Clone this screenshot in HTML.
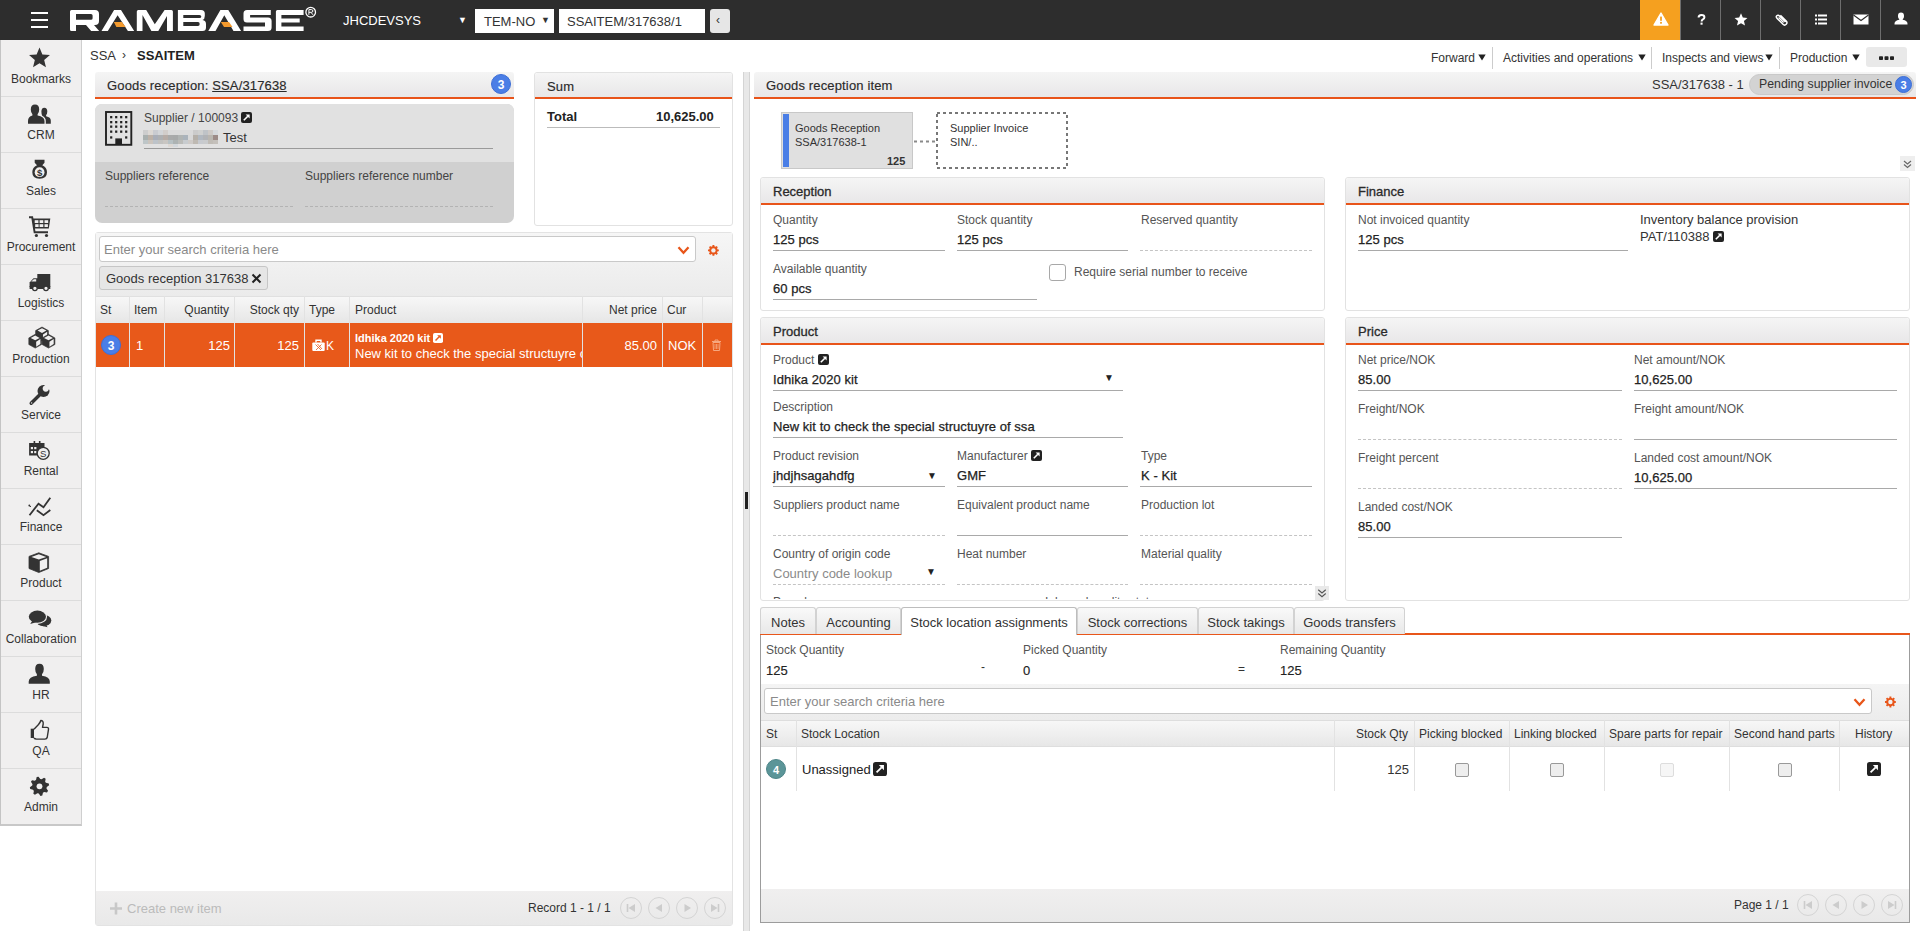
<!DOCTYPE html>
<html><head><meta charset="utf-8">
<style>
*{box-sizing:border-box;margin:0;padding:0}
html,body{width:1920px;height:937px;overflow:hidden;background:#fff;font-family:"Liberation Sans",sans-serif;color:#333;font-size:12px}
.a{position:absolute}
.t{position:absolute;white-space:nowrap;line-height:1}
#top{left:0;top:0;width:1920px;height:40px;background:#2d2d2d}
.tb{position:absolute;top:0;width:40px;height:40px;border-left:1px solid #6e6e6e}
#side{left:0;top:40px;width:82px;height:786px;background:#f0efef;border-left:1px solid #c4c4c4;border-right:1px solid #cfcfcf;border-bottom:2px solid #c8c8c8}
.si{position:absolute;left:0;width:80px;height:57px;border-bottom:1px solid #dcdcdc}
.si .lb{position:absolute;left:0;width:80px;text-align:center;top:33px;font-size:12px;color:#333;line-height:1}
.si svg{position:absolute;left:27px;top:6px}
.ph{position:absolute;height:27px;background:linear-gradient(#f5f5f5,#e8e7e8);border-bottom:2px solid #e8541a;border-radius:3px 3px 0 0}
.ph .tt{position:absolute;left:12px;top:7px;font-size:13px;color:#2a2a2a;white-space:nowrap;line-height:1;letter-spacing:0.15px;-webkit-text-stroke:0.15px #2a2a2a}
.pb{position:absolute;border:1px solid #e2e2e2;border-radius:3px;background:#fff}
.lbl{position:absolute;font-size:12px;color:#555;white-space:nowrap;line-height:1}
.val{position:absolute;font-size:13px;color:#222;white-space:nowrap;line-height:1;font-weight:normal;-webkit-text-stroke:0.25px #222;margin-top:-1px;letter-spacing:0.05px}
.ul{position:absolute;height:1px;background:#a9a9a9}
.dl{position:absolute;height:0;border-top:1px dashed #c4c4c4}
.ext{display:inline-block;width:11px;height:11px;background:#222;border-radius:2px;position:relative;vertical-align:middle}
.badge{position:absolute;width:20px;height:20px;border-radius:50%;background:#4a7ee6;color:#fff;font-size:12px;font-weight:bold;text-align:center;line-height:20px;border:1px solid #3d6fd6}
.vl{position:absolute;width:1px;background:#e2e2e2}
.gh{position:absolute;top:304px;font-size:12px;color:#333;white-space:nowrap;line-height:1}
.gr{position:absolute;top:339px;font-size:13px;color:#fff;white-space:nowrap;line-height:1}
.pg{position:absolute;width:22px;height:22px;border:1px solid #d4d4d4;border-radius:50%}
.pg svg{position:absolute;left:-1px;top:-1px}
.hb{font-weight:normal;font-size:13px !important;top:7px !important;letter-spacing:0 !important;-webkit-text-stroke:0.3px #2a2a2a !important}
.cb{position:absolute;width:14px;height:14px;border:1px solid #999;border-radius:2px;background:#eee}
.tab{position:absolute;top:607px;height:27px;background:linear-gradient(#f9f9f9,#e8e8e8);border:1px solid #d2d2d2;border-bottom:none;border-radius:3px 3px 0 0;font-size:13px;color:#333;line-height:29px;text-align:center;white-space:nowrap}
.tab.act{background:#fff;height:28px;border-color:#bdbdbd}
.gh2{position:absolute;top:728px;font-size:12px;color:#333;white-space:nowrap;line-height:1}
.exs{vertical-align:-1px}
.vr{-webkit-text-stroke:0.15px #222 !important}
</style></head><body>
<!-- TOP BAR -->
<div id="top" class="a">
  <div class="a" style="left:31px;top:12px;width:17px;height:2px;background:#fff"></div>
  <div class="a" style="left:31px;top:19px;width:17px;height:2px;background:#fff"></div>
  <div class="a" style="left:31px;top:26px;width:17px;height:2px;background:#fff"></div>
  <svg class="a" style="left:70px;top:4px" width="252" height="28" viewBox="0 -6 252 28">
    <g fill="#fff" fill-rule="evenodd">
      <path d="M0,1.5 Q0,0 1.5,0 H25 Q29,0 29,4 V11 Q29,15 25,15 H24 L29.2,21 H21.2 L16,15 H6 V21 H1.5 Q0,21 0,19.5 Z M6,4 H21 Q22.6,4 22.6,5.5 V8.3 Q22.6,9.8 21,9.8 H6 Z"/>
      <path d="M31.5,21 L44.1,0 H51 L64.2,21 H57.9 L47.6,5.2 L37.8,21 Z"/>
      <path d="M66.8,21 V1.5 Q66.8,0 68.3,0 H76.2 L84.8,14.3 L94.6,0 H101.4 Q102.9,0 102.9,1.5 V21 H97 V6 L88.3,21 H81.4 L72.5,5 V21 Z"/>
      <path d="M107.9,21 V0 H131 Q134.8,0 134.8,3.5 V6 Q134.8,9.3 132.5,10 Q136,10.7 136,14 V17.5 Q136,21 132.5,21 Z M113.3,4.9 H129.5 Q131.3,4.9 131.3,6.4 Q131.3,8 129.5,8 H113.3 Z M113.3,12 H128 Q129.7,12 129.7,13.9 Q129.7,15.9 128,15.9 H113.3 Z"/>
      <path d="M138.3,21 L150.4,0 H158.3 L171.1,21 H163.5 L154.3,5.3 L145.5,21 Z"/>
      <path d="M177,0 H200.8 V5 H180.1 V7.4 H198 Q201.6,7.4 201.6,11 V17.5 Q201.6,21 198,21 H173.5 V16.4 H195 V12.5 H177 Q173.5,12.5 173.5,9 V3.5 Q173.5,0 177,0 Z"/>
      <path d="M205.9,21 V1.5 Q205.9,0 207.4,0 H233.6 V5 H211.4 V8.6 H229.7 V12.5 H211.4 V16.4 H233.6 V21 Z"/>
    </g>
    <path d="M43.85,12 H51.9 L55.6,16.9 H46.4 Z M150.8,12 H159 L162.5,17 H154 Z" fill="#f39a2e"/>
    <circle cx="240.7" cy="2.2" r="4.8" fill="none" stroke="#fff" stroke-width="1.3"/>
    <path d="M238.9,4.8 V-0.4 H241.4 Q242.9,-0.4 242.9,1 Q242.9,2.3 241.4,2.3 H238.9 M241,2.3 L243,4.8" fill="none" stroke="#fff" stroke-width="1"/>
  </svg>
  <div class="t" style="left:343px;top:14px;font-size:13px;color:#fff">JHCDEVSYS</div>
  <div class="t" style="left:458px;top:16px;font-size:9px;color:#fff">&#9660;</div>
  <div class="a" style="left:475px;top:9px;width:79px;height:24px;background:#fff"></div>
  <div class="t" style="left:484px;top:15px;font-size:13px;color:#333">TEM-NO</div>
  <div class="t" style="left:541px;top:16px;font-size:9px;color:#333">&#9660;</div>
  <div class="a" style="left:559px;top:9px;width:146px;height:24px;background:#fff"></div>
  <div class="t" style="left:567px;top:15px;font-size:13px;color:#333">SSAITEM/317638/1</div>
  <div class="a" style="left:710px;top:9px;width:20px;height:24px;background:#e6e6e6;border-radius:3px"></div>
  <div class="t" style="left:716px;top:14px;font-size:12px;color:#333">&#8249;</div>
  <div class="tb" style="left:1640px;background:#f5a01f;border-left:none"></div>
  <div class="tb" style="left:1680px"></div>
  <div class="tb" style="left:1720px"></div>
  <div class="tb" style="left:1760px"></div>
  <div class="tb" style="left:1800px"></div>
  <div class="tb" style="left:1840px"></div>
  <div class="tb" style="left:1880px"></div>
  <svg class="a" style="left:1653px;top:12px" width="16" height="14" viewBox="0 0 16 14"><path d="M8,1 L15,13 H1 Z" fill="#fff" stroke="#fff" stroke-width="1.4" stroke-linejoin="round"/><rect x="7.1" y="4.6" width="1.8" height="4.2" fill="#f5a01f"/><rect x="7.1" y="9.9" width="1.8" height="1.8" fill="#f5a01f"/></svg>
  <svg class="a" style="left:1697px;top:14px" width="9" height="11" viewBox="0 0 9 11"><path d="M1.6,3.6 Q1.6,1 4.5,1 Q7.4,1 7.4,3.3 Q7.4,4.6 5.9,5.4 Q4.6,6.1 4.6,7.4" fill="none" stroke="#fff" stroke-width="2"/><rect x="3.5" y="8.6" width="2.1" height="2.1" fill="#fff"/></svg>
  <svg class="a" style="left:1734px;top:13px" width="14" height="13" viewBox="0 0 24 23"><path d="M12,0.5 L15.2,8.1 L23.4,8.8 L17.2,14.2 L19.1,22.3 L12,18 L4.9,22.3 L6.8,14.2 L0.6,8.8 L8.8,8.1 Z" fill="#fff"/></svg>
  <svg class="a" style="left:1775px;top:13px" width="13" height="13" viewBox="0 0 13 13"><path d="M10.5,9 L4.5,3 Q3,1.5 1.8,2.7 Q0.6,3.9 2.1,5.4 L8,11.3 Q9.6,12.9 11.2,11.3 Q12.8,9.7 11.2,8.1 L5.4,2.3" fill="none" stroke="#fff" stroke-width="1.5"/><path d="M3.6,4.5 L8.6,9.5" stroke="#fff" stroke-width="1.3"/></svg>
  <svg class="a" style="left:1815px;top:14px" width="12" height="11" viewBox="0 0 12 11"><g fill="#fff"><rect x="0" y="0.5" width="2" height="2"/><rect x="3" y="0.5" width="9" height="2"/><rect x="0" y="4.5" width="2" height="2"/><rect x="3" y="4.5" width="9" height="2"/><rect x="0" y="8.5" width="2" height="2"/><rect x="3" y="8.5" width="9" height="2"/></g></svg>
  <svg class="a" style="left:1853px;top:14px" width="16" height="11" viewBox="0 0 16 11"><rect x="0.5" y="0.5" width="15" height="10" fill="#fff"/><path d="M0.5,1 L8,6.5 L15.5,1" fill="none" stroke="#2d2d2d" stroke-width="1.1"/></svg>
  <svg class="a" style="left:1894px;top:12px" width="14" height="13" viewBox="0 0 16 15"><path d="M8,0.5 Q11.5,0.5 11.5,4.5 Q11.5,7 10,8.3 V9 Q15.5,10 15.5,13.5 V14.5 H0.5 V13.5 Q0.5,10 6,9 V8.3 Q4.5,7 4.5,4.5 Q4.5,0.5 8,0.5 Z" fill="#fff"/></svg>
</div>

<!-- SIDEBAR -->
<div id="side" class="a">
  <div class="si" style="top:0px"><svg width="40" height="32" viewBox="0 0 40 32" style="left:19px;top:0"><path d="M19.50,7.40 L22.38,14.44 L29.96,15.00 L24.16,19.91 L25.97,27.30 L19.50,23.30 L13.03,27.30 L14.84,19.91 L9.04,15.00 L16.62,14.44 Z" fill="#333"/></svg><div class="lb">Bookmarks</div></div>
  <div class="si" style="top:56px"><svg width="40" height="32" viewBox="0 0 40 32" style="left:19px;top:0"><path d="M15,8.4 Q19.2,8.4 19.2,13.5 Q19.2,16.5 17.6,18.2 V19.5 Q24.5,20.8 24.5,25 V27.8 H8 V25 Q8,20.8 12.4,19.5 V18.2 Q10.8,16.5 10.8,13.5 Q10.8,8.4 15,8.4 Z" fill="#333"/><path d="M24.3,11.7 Q27.3,11.7 27.3,15.5 Q27.3,17.8 26.1,19 V20.2 Q30.8,21.3 30.8,24.5 V27.8 H25.8 V25 Q25.8,21.5 22.2,19.8 Q21.4,18 21.4,15.5 Q21.4,11.7 24.3,11.7 Z" fill="#333"/></svg><div class="lb">CRM</div></div>
  <div class="si" style="top:112px"><svg width="40" height="32" viewBox="0 0 40 32" style="left:19px;top:0"><path d="M14.7,7.8 H24.5 V10.8 L22.3,13.2 Q27,15.2 27,20.3 Q27,26.8 19.6,26.8 Q12.3,26.8 12.3,20.3 Q12.3,15.2 17,13.2 L14.7,10.8 Z" fill="#333"/><circle cx="19.6" cy="20.2" r="4.9" fill="#f0efef"/><text x="19.6" y="23.6" font-family="Liberation Sans" font-size="9.5" font-weight="bold" text-anchor="middle" fill="#333">$</text></svg><div class="lb">Sales</div></div>
  <div class="si" style="top:168px"><svg width="40" height="32" viewBox="0 0 40 32" style="left:19px;top:0"><path d="M9,9.3 H12.2 L14.6,24.2 H28" fill="none" stroke="#333" stroke-width="1.9"/><path d="M12.4,10.6 H30.3 L28.8,20.5 H13.8 Z" fill="#333"/><rect x="14.7" y="12.2" width="3.7" height="2.8" fill="#f0efef"/><rect x="19.6" y="12.2" width="3.7" height="2.8" fill="#f0efef"/><rect x="24.5" y="12.2" width="3.7" height="2.8" fill="#f0efef"/><rect x="15.2" y="16.2" width="3.4" height="2.8" fill="#f0efef"/><rect x="19.6" y="16.2" width="3.7" height="2.8" fill="#f0efef"/><rect x="24.5" y="16.2" width="3.4" height="2.8" fill="#f0efef"/><circle cx="16.4" cy="27.5" r="1.6" fill="#333"/><circle cx="26.5" cy="27.5" r="1.6" fill="#333"/></svg><div class="lb">Procurement</div></div>
  <div class="si" style="top:224px"><svg width="40" height="32" viewBox="0 0 40 32" style="left:19px;top:0"><path d="M17.3,10 H30.3 V23 H17.3 Z" fill="#333"/><path d="M9.6,18.5 L13.5,14.2 H18 V23 H9.6 Z" fill="#333"/><path d="M11.2,17.6 L13.8,15.3 H16.2 V17.6 Z" fill="#f0efef"/><rect x="9.6" y="22" width="20.7" height="3" fill="#333"/><circle cx="14.9" cy="24.3" r="2.3" fill="#f0efef" stroke="#333" stroke-width="1.3"/><circle cx="26" cy="24.3" r="2.3" fill="#f0efef" stroke="#333" stroke-width="1.3"/></svg><div class="lb">Logistics</div></div>
  <div class="si" style="top:280px"><svg width="40" height="32" viewBox="0 0 40 32" style="left:19px;top:0"><path d="M22,7 L28.4,10.6 L28.4,17.2 L22,20.799999999999997 L15.6,17.2 L15.6,10.6 Z" fill="#333" stroke="#333" stroke-width="0.6" stroke-linejoin="round"/><path d="M22,8.2 L26.479999999999997,10.6 L22,13.0 L17.52,10.6 Z" fill="#f0efef"/><path d="M22.96,14.559999999999999 L27.2,11.68 L27.2,16.599999999999998 L22.96,19.479999999999997 Z" fill="#f0efef"/><path d="M15.2,14.3 L21.6,17.900000000000002 L21.6,24.5 L15.2,28.1 L8.799999999999999,24.5 L8.799999999999999,17.900000000000002 Z" fill="#333" stroke="#333" stroke-width="0.6" stroke-linejoin="round"/><path d="M15.2,15.5 L19.68,17.900000000000002 L15.2,20.3 L10.719999999999999,17.900000000000002 Z" fill="#f0efef"/><path d="M16.16,21.86 L20.400000000000002,18.980000000000004 L20.400000000000002,23.9 L16.16,26.78 Z" fill="#f0efef"/><path d="M28.5,14.3 L34.9,17.900000000000002 L34.9,24.5 L28.5,28.1 L22.1,24.5 L22.1,17.900000000000002 Z" fill="#333" stroke="#333" stroke-width="0.6" stroke-linejoin="round"/><path d="M28.5,15.5 L32.98,17.900000000000002 L28.5,20.3 L24.020000000000003,17.900000000000002 Z" fill="#f0efef"/><path d="M29.46,21.86 L33.699999999999996,18.980000000000004 L33.699999999999996,23.9 L29.46,26.78 Z" fill="#f0efef"/></svg><div class="lb">Production</div></div>
  <div class="si" style="top:336px"><svg width="40" height="32" viewBox="0 0 40 32" style="left:19px;top:0"><path d="M11.2,27.3 L20.5,18" stroke="#333" stroke-width="3.4" stroke-linecap="round"/><circle cx="23.5" cy="15" r="6" fill="#333"/><circle cx="25.8" cy="12.6" r="3.1" fill="#f0efef"/><path d="M25.8,12.6 L31,7.5 L31,14 Z" fill="#f0efef"/><path d="M25.8,12.6 L31,7.5 L24,7 Z" fill="#f0efef"/><circle cx="11.6" cy="26.9" r="0.7" fill="#f0efef"/></svg><div class="lb">Service</div></div>
  <div class="si" style="top:392px"><svg width="40" height="32" viewBox="0 0 40 32" style="left:19px;top:0"><path d="M9.1,11 H24.5 V16 Q19.5,17 19.5,21 Q19.5,22.5 20,23.5 H9.1 Z" fill="#333"/><rect x="13.6" y="9" width="1.6" height="3" fill="#333"/><rect x="18.9" y="9" width="1.6" height="3" fill="#333"/><rect x="10.8" y="15" width="2.2" height="2.2" fill="#f0efef"/><rect x="14.2" y="15" width="2.2" height="2.2" fill="#f0efef"/><rect x="10.8" y="19" width="2.2" height="2.2" fill="#f0efef"/><rect x="14.2" y="19" width="2.2" height="2.2" fill="#f0efef"/><circle cx="23.2" cy="21.3" r="6" fill="#f0efef" stroke="#333" stroke-width="1.3"/><text x="23.2" y="24.8" font-family="Liberation Sans" font-size="9.5" text-anchor="middle" fill="#333">S</text></svg><div class="lb">Rental</div></div>
  <div class="si" style="top:448px"><svg width="40" height="32" viewBox="0 0 40 32" style="left:19px;top:0"><path d="M9.5,27.2 L18.5,15.7 L23.5,19.3 L30.3,9.7" fill="none" stroke="#333" stroke-width="1.8"/><path d="M16.8,22.2 L23.5,27.2 L30.3,22" fill="none" stroke="#333" stroke-width="1.8"/><circle cx="9.3" cy="17.5" r="0.9" fill="#333"/><path d="M9.2,17.5 L11,18.8" stroke="#333" stroke-width="1"/></svg><div class="lb">Finance</div></div>
  <div class="si" style="top:504px"><svg width="40" height="32" viewBox="0 0 40 32" style="left:19px;top:0"><path d="M18.8,8.8 L28.6,12.4 V24.5 L18.8,28.5 L9,24.5 V12.4 Z" fill="#333" stroke="#333" stroke-width="0.8" stroke-linejoin="round"/><path d="M18.8,10.3 L26.2,12.9 L18.8,15.6 L11.4,12.9 Z" fill="#f0efef"/><path d="M19.8,17 L27.2,14.2 V23.7 L19.8,26.8 Z" fill="#f0efef"/></svg><div class="lb">Product</div></div>
  <div class="si" style="top:560px"><svg width="40" height="32" viewBox="0 0 40 32" style="left:19px;top:0"><ellipse cx="23.6" cy="20.5" rx="7.7" ry="5.8" fill="#333"/><path d="M25.5,24 L27.6,27.2 L21,25.5 Z" fill="#333"/><ellipse cx="17.4" cy="16.7" rx="9.7" ry="7.2" fill="#f0efef"/><ellipse cx="17.4" cy="16.7" rx="8.6" ry="6.1" fill="#333"/><path d="M12.5,20.5 L10.2,24 L17,22" fill="#333"/></svg><div class="lb">Collaboration</div></div>
  <div class="si" style="top:616px"><svg width="40" height="32" viewBox="0 0 40 32" style="left:19px;top:0"><path d="M19.5,7.7 Q23.8,7.7 23.8,13 Q23.8,16.5 22,18.3 V19.7 Q29.8,21 29.8,25.5 V27.8 H8.7 V25.5 Q8.7,21 16.9,19.7 V18.3 Q15.2,16.5 15.2,13 Q15.2,7.7 19.5,7.7 Z" fill="#333"/></svg><div class="lb">HR</div></div>
  <div class="si" style="top:672px"><svg width="40" height="32" viewBox="0 0 40 32" style="left:19px;top:0"><rect x="10.7" y="16.7" width="3.3" height="9.3" fill="#333"/><path d="M14,17.2 L18.5,12.5 Q20.5,10 20.8,8.5 Q23.5,8.5 23.2,12 L22.5,15.4 H26.8 Q28.8,15.4 28.5,17.4 L27.2,25.5 Q26.8,27.1 25,27.1 H16.5 Q14.8,27.1 14,26" fill="none" stroke="#333" stroke-width="1.4" stroke-linejoin="round"/></svg><div class="lb">QA</div></div>
  <div class="si" style="top:728px;border-bottom:none"><svg width="40" height="32" viewBox="0 0 40 32" style="left:19px;top:0"><path d="M16.68,9.02 L18.55,8.65 L20.22,11.04 L21.62,11.31 L24.07,9.75 L25.65,10.80 L25.14,13.67 L25.94,14.86 L28.78,15.48 L29.15,17.35 L26.76,19.02 L26.49,20.42 L28.05,22.87 L27.00,24.45 L24.13,23.94 L22.94,24.74 L22.32,27.58 L20.45,27.95 L18.78,25.56 L17.38,25.29 L14.93,26.85 L13.35,25.80 L13.86,22.93 L13.06,21.74 L10.22,21.12 L9.85,19.25 L12.24,17.58 L12.51,16.18 L10.95,13.73 L12.00,12.15 L14.87,12.66 L16.06,11.86 Z" fill="#333"/><circle cx="19.5" cy="18.3" r="2.9" fill="#f0efef"/></svg><div class="lb">Admin</div></div>
</div>

<!-- BREADCRUMB -->
<div class="t" style="left:90px;top:49px;font-size:13px;color:#333">SSA</div>
<div class="t" style="left:122px;top:49px;font-size:12px;color:#333">&#8250;</div>
<div class="t" style="left:137px;top:49px;font-size:13px;font-weight:bold;color:#222">SSAITEM</div>

<!-- TOOLBAR -->
<div class="t" style="left:1431px;top:52px;font-size:12px;color:#333">Forward</div>
<div class="t" style="left:1503px;top:52px;font-size:12px;color:#333">Activities and operations</div>
<div class="t" style="left:1662px;top:52px;font-size:12px;color:#333">Inspects and views</div>
<div class="t" style="left:1790px;top:52px;font-size:12px;color:#333">Production</div>
<svg class="a" style="left:1478px;top:54px" width="8" height="7" viewBox="0 0 8 7"><path d="M0.3,0.5 H7.7 L4,6.5 Z" fill="#222"/></svg>
<svg class="a" style="left:1638px;top:54px" width="8" height="7" viewBox="0 0 8 7"><path d="M0.3,0.5 H7.7 L4,6.5 Z" fill="#222"/></svg>
<svg class="a" style="left:1765px;top:54px" width="8" height="7" viewBox="0 0 8 7"><path d="M0.3,0.5 H7.7 L4,6.5 Z" fill="#222"/></svg>
<svg class="a" style="left:1852px;top:54px" width="8" height="7" viewBox="0 0 8 7"><path d="M0.3,0.5 H7.7 L4,6.5 Z" fill="#222"/></svg>
<div class="a" style="left:1866px;top:47px;width:41px;height:20px;background:#e9e9e9;border-radius:3px"></div>
<svg class="a" style="left:1879px;top:56px" width="15" height="5" viewBox="0 0 15 5"><rect x="0" y="0.3" width="4" height="3.8" rx="0.8" fill="#222"/><rect x="5.5" y="0.3" width="4" height="3.8" rx="0.8" fill="#222"/><rect x="11" y="0.3" width="4" height="3.8" rx="0.8" fill="#222"/></svg>
<div class="a" style="left:1492px;top:47px;width:1px;height:22px;background:#ccc"></div>
<div class="a" style="left:1651px;top:47px;width:1px;height:22px;background:#ccc"></div>
<div class="a" style="left:1779px;top:47px;width:1px;height:22px;background:#ccc"></div>

<!-- LEFT: Goods reception header -->
<div class="ph" style="left:95px;top:72px;width:419px;height:27px"><div class="tt" style="left:12px;top:7px">Goods reception: <span style="text-decoration:underline">SSA/317638</span></div></div>
<div class="badge" style="left:491px;top:74px">3</div>
<!-- Supplier box -->
<div class="a" style="left:95px;top:104px;width:419px;height:119px;background:#d0d0d0;border-radius:7px;overflow:hidden">
  <div class="a" style="left:0;top:0;width:419px;height:58px;background:#e1e1e1"></div>
  <svg class="a" style="left:10px;top:7px" width="28" height="35" viewBox="0 0 28 35"><rect x="1" y="1" width="25.3" height="32.8" fill="none" stroke="#222" stroke-width="1.9"/><g fill="#222"><rect x="5.1" y="5" width="2.2" height="2.3"/><rect x="10.1" y="5" width="2.2" height="2.3"/><rect x="15.1" y="5" width="2.2" height="2.3"/><rect x="20.1" y="5" width="2.2" height="2.3"/><rect x="5.1" y="10" width="2.2" height="2.3"/><rect x="10.1" y="10" width="2.2" height="2.3"/><rect x="15.1" y="10" width="2.2" height="2.3"/><rect x="20.1" y="10" width="2.2" height="2.3"/><rect x="5.1" y="14.5" width="2.2" height="2.3"/><rect x="10.1" y="14.5" width="2.2" height="2.3"/><rect x="15.1" y="14.5" width="2.2" height="2.3"/><rect x="20.1" y="14.5" width="2.2" height="2.3"/><rect x="5.1" y="19.5" width="2.2" height="2.3"/><rect x="10.1" y="19.5" width="2.2" height="2.3"/><rect x="15.1" y="19.5" width="2.2" height="2.3"/><rect x="20.1" y="19.5" width="2.2" height="2.3"/><rect x="5.1" y="25.3" width="2.2" height="2.3"/><rect x="20.1" y="25.3" width="2.2" height="2.3"/><rect x="10.3" y="27.4" width="6.7" height="6"/></g></svg>
  <div class="lbl" style="left:49px;top:8px;color:#444">Supplier / 100093 <svg class="exs" width="11" height="11" viewBox="0 0 11 11"><rect width="11" height="11" rx="2" fill="#222"/><path d="M2.8,8.2 L6.8,4.2" stroke="#fff" stroke-width="1.6"/><path d="M4.6,2.4 H8.6 V6.4 Z" fill="#fff"/></svg></div>
  <div class="a" style="left:48px;top:26px;width:5px;height:5px;background:#cdcdcd"></div><div class="a" style="left:53px;top:26px;width:5px;height:5px;background:#dcd8d4"></div><div class="a" style="left:58px;top:26px;width:5px;height:5px;background:#c9cbd0"></div><div class="a" style="left:63px;top:26px;width:5px;height:5px;background:#d3d5d8"></div><div class="a" style="left:68px;top:26px;width:5px;height:5px;background:#d2cdca"></div><div class="a" style="left:73px;top:26px;width:5px;height:5px;background:#dadada"></div><div class="a" style="left:78px;top:26px;width:5px;height:5px;background:#dadada"></div><div class="a" style="left:83px;top:26px;width:5px;height:5px;background:#dadada"></div><div class="a" style="left:88px;top:26px;width:5px;height:5px;background:#dadada"></div><div class="a" style="left:93px;top:26px;width:5px;height:5px;background:#dadada"></div><div class="a" style="left:98px;top:26px;width:5px;height:5px;background:#cbcbcb"></div><div class="a" style="left:103px;top:26px;width:5px;height:5px;background:#cfd0cf"></div><div class="a" style="left:108px;top:26px;width:5px;height:5px;background:#bfc3c7"></div><div class="a" style="left:113px;top:26px;width:5px;height:5px;background:#cdc9c6"></div><div class="a" style="left:118px;top:26px;width:5px;height:5px;background:#d5d8db"></div><div class="a" style="left:48px;top:31px;width:5px;height:5px;background:#a9b0af"></div><div class="a" style="left:53px;top:31px;width:5px;height:5px;background:#bcb1a7"></div><div class="a" style="left:58px;top:31px;width:5px;height:5px;background:#a9aeb8"></div><div class="a" style="left:63px;top:31px;width:5px;height:5px;background:#aeb0b2"></div><div class="a" style="left:68px;top:31px;width:5px;height:5px;background:#b7aca6"></div><div class="a" style="left:73px;top:31px;width:5px;height:5px;background:#a9aaaa"></div><div class="a" style="left:78px;top:31px;width:5px;height:5px;background:#a7a9a9"></div><div class="a" style="left:83px;top:31px;width:5px;height:5px;background:#b0b4b3"></div><div class="a" style="left:88px;top:31px;width:5px;height:5px;background:#aab3bb"></div><div class="a" style="left:93px;top:31px;width:5px;height:5px;background:#d8d8d8"></div><div class="a" style="left:98px;top:31px;width:5px;height:5px;background:#b5b0a9"></div><div class="a" style="left:103px;top:31px;width:5px;height:5px;background:#b1b8c0"></div><div class="a" style="left:108px;top:31px;width:5px;height:5px;background:#b1b3b6"></div><div class="a" style="left:113px;top:31px;width:5px;height:5px;background:#b9b6b0"></div><div class="a" style="left:118px;top:31px;width:5px;height:5px;background:#9c8b87"></div><div class="a" style="left:48px;top:36px;width:5px;height:4px;background:#bec6c8"></div><div class="a" style="left:53px;top:36px;width:5px;height:4px;background:#cbc4bd"></div><div class="a" style="left:58px;top:36px;width:5px;height:4px;background:#bdc3c9"></div><div class="a" style="left:63px;top:36px;width:5px;height:4px;background:#c2c2c0"></div><div class="a" style="left:68px;top:36px;width:5px;height:4px;background:#c9c6c2"></div><div class="a" style="left:73px;top:36px;width:5px;height:4px;background:#b7c1c4"></div><div class="a" style="left:78px;top:36px;width:5px;height:4px;background:#adb3b3"></div><div class="a" style="left:83px;top:36px;width:5px;height:4px;background:#bbbcb9"></div><div class="a" style="left:88px;top:36px;width:5px;height:4px;background:#c8cccf"></div><div class="a" style="left:93px;top:36px;width:5px;height:4px;background:#cfcbc8"></div><div class="a" style="left:98px;top:36px;width:5px;height:4px;background:#bfbab3"></div><div class="a" style="left:103px;top:36px;width:5px;height:4px;background:#c7cacf"></div><div class="a" style="left:108px;top:36px;width:5px;height:4px;background:#c9cbcd"></div><div class="a" style="left:113px;top:36px;width:5px;height:4px;background:#c0bcb6"></div><div class="a" style="left:118px;top:36px;width:5px;height:4px;background:#c4c0bb"></div><div class="a" style="left:73px;top:40px;width:5px;height:3px;background:#ddd8d3"></div><div class="a" style="left:78px;top:40px;width:5px;height:3px;background:#d3d8dc"></div>
  <div class="t" style="left:128px;top:27px;font-size:13px;color:#333">Test</div>
  <div class="a" style="left:49px;top:44px;width:349px;height:1px;background:#9a9a9a"></div>
  <div class="lbl" style="left:10px;top:66px;color:#444">Suppliers reference</div>
  <div class="lbl" style="left:210px;top:66px;color:#444">Suppliers reference number</div>
  <div class="dl" style="left:10px;top:102px;width:188px;border-color:#b3b3b3"></div>
  <div class="dl" style="left:210px;top:102px;width:188px;border-color:#b3b3b3"></div>
</div>
<!-- Sum panel -->
<div class="pb" style="left:534px;top:72px;width:199px;height:154px"></div>
<div class="ph" style="left:535px;top:73px;width:197px;height:26px"><div class="tt" style="left:12px;top:7px">Sum</div></div>
<div class="t" style="left:547px;top:110px;font-size:13px;font-weight:bold;color:#222">Total</div>
<div class="t" style="left:656px;top:110px;font-size:13px;font-weight:bold;color:#222">10,625.00</div>
<div class="a" style="left:547px;top:127px;width:173px;height:1px;background:#bbb"></div>

<!-- Grid panel -->
<div class="a" style="left:95px;top:232px;width:638px;height:694px;border:1px solid #e3e3e3;border-radius:3px;background:#fff"></div>
<div class="a" style="left:96px;top:233px;width:636px;height:63px;background:linear-gradient(#f6f6f6,#ebebeb)"></div>
<div class="a" style="left:99px;top:236px;width:597px;height:26px;background:#fff;border:1px solid #c9c9c9;border-radius:3px"></div>
<div class="t" style="left:104px;top:243px;font-size:13px;color:#8a8a8a">Enter your search criteria here</div>
<svg class="a" style="left:677px;top:244px" width="13" height="12" viewBox="0 0 13 12"><path d="M1.5,3.3 L6.5,8.8 L11.5,3.3" fill="none" stroke="#e8561a" stroke-width="2.3"/></svg>
<svg class="a" style="left:706px;top:243px" width="15" height="15" viewBox="706 243 15 15"><path d="M712.48,246.20 L712.43,244.99 L714.37,244.99 L714.32,246.20 L715.72,246.78 L716.54,245.89 L717.91,247.26 L717.02,248.08 L717.60,249.48 L718.81,249.43 L718.81,251.37 L717.60,251.32 L717.02,252.72 L717.91,253.54 L716.54,254.91 L715.72,254.02 L714.32,254.60 L714.37,255.81 L712.43,255.81 L712.48,254.60 L711.08,254.02 L710.26,254.91 L708.89,253.54 L709.78,252.72 L709.20,251.32 L707.99,251.37 L707.99,249.43 L709.20,249.48 L709.78,248.08 L708.89,247.26 L710.26,245.89 L711.08,246.78 Z" fill="#e8561a"/><circle cx="713.4" cy="250.4" r="2.2" fill="#efefef"/></svg>
<div class="a" style="left:99px;top:266px;width:169px;height:24px;background:#e6e6e6;border:1px solid #c6c6c6;border-radius:3px"></div>
<div class="t" style="left:106px;top:272px;font-size:13px;color:#333">Goods reception 317638</div>
<svg class="a" style="left:251px;top:273px" width="11" height="11" viewBox="0 0 11 11"><path d="M1.5,1.5 L9.5,9.5 M9.5,1.5 L1.5,9.5" stroke="#222" stroke-width="2"/></svg>
<!-- grid header -->
<div class="a" style="left:96px;top:296px;width:636px;height:27px;background:linear-gradient(#f7f7f7,#e6e6e6);border-top:1px solid #e0e0e0"></div>
<div class="a" style="left:96px;top:323px;width:636px;height:44px;background:#e8591a"></div>
<div class="vl" style="left:129px;top:296px;height:71px"></div>
<div class="vl" style="left:164px;top:296px;height:71px"></div>
<div class="vl" style="left:234px;top:296px;height:71px"></div>
<div class="vl" style="left:304px;top:296px;height:71px"></div>
<div class="vl" style="left:349px;top:296px;height:71px"></div>
<div class="vl" style="left:582px;top:296px;height:71px"></div>
<div class="vl" style="left:662px;top:296px;height:71px"></div>
<div class="vl" style="left:702px;top:296px;height:71px"></div>
<div class="gh" style="left:100px">St</div>
<div class="gh" style="left:134px">Item</div>
<div class="gh" style="left:165px;width:64px;text-align:right">Quantity</div>
<div class="gh" style="left:235px;width:64px;text-align:right">Stock qty</div>
<div class="gh" style="left:309px">Type</div>
<div class="gh" style="left:355px">Product</div>
<div class="gh" style="left:583px;width:74px;text-align:right">Net price</div>
<div class="gh" style="left:667px">Cur</div>
<div class="badge" style="left:101px;top:335px">3</div>
<div class="gr" style="left:136px">1</div>
<div class="gr" style="left:165px;width:65px;text-align:right">125</div>
<div class="gr" style="left:235px;width:64px;text-align:right">125</div>
<svg class="a" style="left:312px;top:339px" width="13" height="13" viewBox="0 0 13 13"><path d="M4,3.5 V1.2 H9 V3.5" fill="none" stroke="#fff" stroke-width="1.4"/><rect x="0.3" y="3.5" width="12.4" height="8.5" rx="1" fill="#fff"/><path d="M3.5,5.5 L9,11 M9.5,5.5 L4,11 M5.5,5 L10,10" stroke="#e8591a" stroke-width="0.8"/></svg>
<div class="gr" style="left:326px;font-size:12px;top:340px">K</div>
<div class="t" style="left:355px;top:333px;font-size:11px;font-weight:bold;color:#fff">Idhika 2020 kit <svg class="exs" width="10" height="10" viewBox="0 0 11 11"><rect width="11" height="11" rx="2" fill="#fff"/><path d="M2.8,8.2 L6.8,4.2" stroke="#e8591a" stroke-width="1.6"/><path d="M4.6,2.4 H8.6 V6.4 Z" fill="#e8591a"/></svg></div>
<div class="a" style="left:355px;top:346px;width:227px;height:16px;overflow:hidden"><div class="t" style="left:0;top:1px;font-size:13px;color:#fff">New kit to check the special structuyre of ssa</div></div>
<div class="gr" style="left:583px;width:74px;text-align:right">85.00</div>
<div class="gr" style="left:668px">NOK</div>
<svg class="a" style="left:711px;top:339px" width="11" height="12" viewBox="0 0 11 12"><path d="M1,2.5 H10 M4,2.5 V1 H7 V2.5 M2,3.5 H9 L8.5,11.5 H2.5 Z" fill="none" stroke="#f6a77f" stroke-width="1"/><path d="M4,5 V10 M5.5,5 V10 M7,5 V10" stroke="#f6a77f" stroke-width="0.8"/></svg>
<!-- grid footer -->
<div class="a" style="left:96px;top:891px;width:636px;height:34px;background:linear-gradient(#f0efef,#e9e9e9)"></div>
<svg class="a" style="left:110px;top:902px" width="12" height="13" viewBox="0 0 12 13"><path d="M6,0.5 V12.5 M0,6.5 H12" stroke="#c8c8c8" stroke-width="2.6"/></svg>
<div class="t" style="left:127px;top:902px;font-size:13px;color:#bbb">Create new item</div>
<div class="t" style="left:528px;top:902px;font-size:12px;color:#333">Record 1 - 1 / 1</div>
<div class="pg" style="left:620px;top:897px"><svg width="22" height="22" viewBox="0 0 22 22"><path d="M7.5,7 V15" stroke="#ccc" stroke-width="1.6"/><path d="M15,7 L8.5,11 L15,15 Z" fill="#ccc"/></svg></div>
<div class="pg" style="left:648px;top:897px"><svg width="22" height="22" viewBox="0 0 22 22"><path d="M14,7 L7.5,11 L14,15 Z" fill="#ccc"/></svg></div>
<div class="pg" style="left:676px;top:897px"><svg width="22" height="22" viewBox="0 0 22 22"><path d="M8.5,7 L15,11 L8.5,15 Z" fill="#ccc"/></svg></div>
<div class="pg" style="left:704px;top:897px"><svg width="22" height="22" viewBox="0 0 22 22"><path d="M14.5,7 V15" stroke="#ccc" stroke-width="1.6"/><path d="M7,7 L13.5,11 L7,15 Z" fill="#ccc"/></svg></div>

<!-- splitter -->
<div class="a" style="left:743px;top:72px;width:7px;height:859px;background:#e8e8e8;border-left:1px solid #d4d4d4;border-right:1px solid #d4d4d4"></div>
<div class="a" style="left:745px;top:492px;width:3px;height:17px;background:#222"></div>
<!-- RIGHT: header -->
<div class="ph" style="left:754px;top:72px;width:1162px;height:27px"><div class="tt" style="left:12px;top:7px">Goods reception item</div></div>
<div class="t" style="left:1652px;top:78px;font-size:13px;color:#333">SSA/317638 - 1</div>
<div class="a" style="left:1749px;top:74px;width:165px;height:21px;border-radius:11px;background:#d3d3d3;border:1px solid #c9c9c9"></div>
<div class="t" style="left:1759px;top:78px;font-size:12.3px;color:#333">Pending supplier invoice</div>
<div class="badge" style="left:1895px;top:76px;width:17px;height:17px;line-height:16px;font-size:11px">3</div>
<!-- workflow -->
<div class="a" style="left:781px;top:112px;width:132px;height:57px;background:#e0e0e0;border:1px solid #c8c8c8"></div>
<div class="a" style="left:783px;top:114px;width:6px;height:53px;background:#4a7ee6"></div>
<div class="t" style="left:795px;top:123px;font-size:11px;color:#333">Goods Reception</div>
<div class="t" style="left:795px;top:137px;font-size:11px;color:#333">SSA/317638-1</div>
<div class="t" style="left:887px;top:156px;font-size:11px;font-weight:bold;color:#333">125</div>
<svg class="a" style="left:914px;top:140px" width="22" height="3"><path d="M0,1.5 H22" stroke="#8a8a8a" stroke-width="2" stroke-dasharray="3 3"/></svg>
<svg class="a" style="left:936px;top:112px" width="132" height="57"><rect x="1" y="1" width="130" height="55" fill="none" stroke="#777" stroke-width="2" stroke-dasharray="3 3"/></svg>
<div class="t" style="left:950px;top:123px;font-size:11px;color:#333">Supplier Invoice</div>
<div class="t" style="left:950px;top:137px;font-size:11px;color:#333">SIN/..</div>
<div class="a" style="left:1900px;top:156px;width:15px;height:15px;background:#eeeeee"></div>
<svg class="a" style="left:1900px;top:156px" width="15" height="15" viewBox="0 0 15 15"><path d="M4,5 L7.5,8 L11,5 M4,8.5 L7.5,11.5 L11,8.5" fill="none" stroke="#666" stroke-width="1.2"/></svg>

<!-- Reception panel -->
<div class="pb" style="left:760px;top:177px;width:565px;height:134px"></div>
<div class="ph" style="left:761px;top:178px;width:563px;height:27px"><div class="tt hb" style="left:12px;top:7px">Reception</div></div>
<div class="lbl" style="left:773px;top:214px">Quantity</div>
<div class="val" style="left:773px;top:234px">125 pcs</div>
<div class="ul" style="left:773px;top:250px;width:172px"></div>
<div class="lbl" style="left:957px;top:214px">Stock quantity</div>
<div class="val" style="left:957px;top:234px">125 pcs</div>
<div class="ul" style="left:957px;top:250px;width:171px"></div>
<div class="lbl" style="left:1141px;top:214px">Reserved quantity</div>
<div class="dl" style="left:1140px;top:250px;width:172px"></div>
<div class="lbl" style="left:773px;top:263px">Available quantity</div>
<div class="val" style="left:773px;top:283px">60 pcs</div>
<div class="ul" style="left:773px;top:299px;width:264px"></div>
<div class="cb" style="left:1049px;top:264px;width:17px;height:17px;background:#fff;border-color:#a8a8a8;border-radius:3px"></div>
<div class="lbl" style="left:1074px;top:266px">Require serial number to receive</div>

<!-- Finance panel -->
<div class="pb" style="left:1345px;top:177px;width:565px;height:134px"></div>
<div class="ph" style="left:1346px;top:178px;width:563px;height:27px"><div class="tt hb" style="left:12px;top:7px">Finance</div></div>
<div class="lbl" style="left:1358px;top:214px">Not invoiced quantity</div>
<div class="val" style="left:1358px;top:234px">125 pcs</div>
<div class="ul" style="left:1358px;top:250px;width:270px"></div>
<div class="t" style="left:1640px;top:213px;font-size:13px;color:#333">Inventory balance provision</div>
<div class="t" style="left:1640px;top:230px;font-size:13px;color:#333">PAT/110388 <svg class="exs" width="11" height="11" viewBox="0 0 11 11"><rect width="11" height="11" rx="2" fill="#222"/><path d="M2.8,8.2 L6.8,4.2" stroke="#fff" stroke-width="1.6"/><path d="M4.6,2.4 H8.6 V6.4 Z" fill="#fff"/></svg></div>

<!-- Product panel -->
<div class="pb" style="left:760px;top:317px;width:565px;height:284px;overflow:hidden"></div>
<div class="ph" style="left:761px;top:318px;width:563px;height:27px"><div class="tt hb" style="left:12px;top:7px">Product</div></div>
<div class="lbl" style="left:773px;top:354px">Product <svg class="exs" width="11" height="11" viewBox="0 0 11 11"><rect width="11" height="11" rx="2" fill="#222"/><path d="M2.8,8.2 L6.8,4.2" stroke="#fff" stroke-width="1.6"/><path d="M4.6,2.4 H8.6 V6.4 Z" fill="#fff"/></svg></div>
<div class="val" style="left:773px;top:374px">Idhika 2020 kit</div>
<div class="t" style="left:1104px;top:373px;font-size:10px;color:#222">&#9660;</div>
<div class="ul" style="left:773px;top:390px;width:350px"></div>
<div class="lbl" style="left:773px;top:401px">Description</div>
<div class="val" style="left:773px;top:421px">New kit to check the special structuyre of ssa</div>
<div class="ul" style="left:773px;top:437px;width:350px"></div>
<div class="lbl" style="left:773px;top:450px">Product revision</div>
<div class="val" style="left:773px;top:470px">jhdjhsagahdfg</div>
<div class="t" style="left:927px;top:471px;font-size:10px;color:#222">&#9660;</div>
<div class="ul" style="left:773px;top:486px;width:172px"></div>
<div class="lbl" style="left:957px;top:450px">Manufacturer <svg class="exs" width="11" height="11" viewBox="0 0 11 11"><rect width="11" height="11" rx="2" fill="#222"/><path d="M2.8,8.2 L6.8,4.2" stroke="#fff" stroke-width="1.6"/><path d="M4.6,2.4 H8.6 V6.4 Z" fill="#fff"/></svg></div>
<div class="val" style="left:957px;top:470px">GMF</div>
<div class="ul" style="left:957px;top:486px;width:171px"></div>
<div class="lbl" style="left:1141px;top:450px">Type</div>
<div class="val" style="left:1141px;top:470px">K - Kit</div>
<div class="ul" style="left:1140px;top:486px;width:172px"></div>
<div class="lbl" style="left:773px;top:499px">Suppliers product name</div>
<div class="dl" style="left:773px;top:535px;width:172px"></div>
<div class="lbl" style="left:957px;top:499px">Equivalent product name</div>
<div class="ul" style="left:957px;top:535px;width:171px"></div>
<div class="lbl" style="left:1141px;top:499px">Production lot</div>
<div class="dl" style="left:1140px;top:535px;width:172px"></div>
<div class="lbl" style="left:773px;top:548px">Country of origin code</div>
<div class="t" style="left:773px;top:567px;font-size:13px;color:#8a8a8a">Country code lookup</div>
<div class="t" style="left:926px;top:567px;font-size:10px;color:#222">&#9660;</div>
<div class="dl" style="left:773px;top:584px;width:172px"></div>
<div class="lbl" style="left:957px;top:548px">Heat number</div>
<div class="dl" style="left:957px;top:584px;width:171px"></div>
<div class="lbl" style="left:1141px;top:548px">Material quality</div>
<div class="dl" style="left:1140px;top:584px;width:172px"></div>
<div class="a" style="left:773px;top:595px;width:540px;height:4px;overflow:hidden"><div class="t" style="left:0;top:1px;font-size:12px;color:#555">Parcel</div><div class="t" style="left:272px;top:1px;font-size:12px;color:#555">Inbound quality status</div></div>
<div class="a" style="left:1315px;top:586px;width:14px;height:14px;background:#e9e9e9"></div>
<svg class="a" style="left:1315px;top:586px" width="14" height="14" viewBox="0 0 15 15"><path d="M3.5,4 L7.5,7.5 L11.5,4 M3.5,8 L7.5,11.5 L11.5,8" fill="none" stroke="#555" stroke-width="1.2"/></svg>

<!-- Price panel -->
<div class="pb" style="left:1345px;top:317px;width:565px;height:284px"></div>
<div class="ph" style="left:1346px;top:318px;width:563px;height:27px"><div class="tt hb" style="left:12px;top:7px">Price</div></div>
<div class="lbl" style="left:1358px;top:354px">Net price/NOK</div>
<div class="val" style="left:1358px;top:374px">85.00</div>
<div class="ul" style="left:1358px;top:390px;width:264px"></div>
<div class="lbl" style="left:1634px;top:354px">Net amount/NOK</div>
<div class="val" style="left:1634px;top:374px">10,625.00</div>
<div class="ul" style="left:1634px;top:390px;width:263px"></div>
<div class="lbl" style="left:1358px;top:403px">Freight/NOK</div>
<div class="dl" style="left:1358px;top:439px;width:264px"></div>
<div class="lbl" style="left:1634px;top:403px">Freight amount/NOK</div>
<div class="ul" style="left:1634px;top:439px;width:263px"></div>
<div class="lbl" style="left:1358px;top:452px">Freight percent</div>
<div class="dl" style="left:1358px;top:488px;width:264px"></div>
<div class="lbl" style="left:1634px;top:452px">Landed cost amount/NOK</div>
<div class="val" style="left:1634px;top:472px">10,625.00</div>
<div class="ul" style="left:1634px;top:488px;width:263px"></div>
<div class="lbl" style="left:1358px;top:501px">Landed cost/NOK</div>
<div class="val" style="left:1358px;top:521px">85.00</div>
<div class="ul" style="left:1358px;top:537px;width:264px"></div>

<!-- Tabs -->
<div class="a" style="left:760px;top:633px;width:1150px;height:2px;background:#e8561a"></div>
<div class="tab" style="left:760px;width:56px">Notes</div>
<div class="tab" style="left:816px;width:85px">Accounting</div>
<div class="tab act" style="left:901px;width:176px">Stock location assignments</div>
<div class="tab" style="left:1077px;width:121px">Stock corrections</div>
<div class="tab" style="left:1198px;width:96px">Stock takings</div>
<div class="tab" style="left:1294px;width:111px">Goods transfers</div>
<!-- tab content -->
<div class="a" style="left:760px;top:635px;width:1150px;height:288px;border:1px solid #9c9c9c;border-top:none;background:#fff"></div>
<div class="lbl" style="left:766px;top:644px">Stock Quantity</div>
<div class="val vr" style="left:766px;top:665px">125</div>
<div class="t" style="left:981px;top:661px;font-size:12px;color:#333">-</div>
<div class="lbl" style="left:1023px;top:644px">Picked Quantity</div>
<div class="val vr" style="left:1023px;top:665px">0</div>
<div class="t" style="left:1238px;top:663px;font-size:12px;color:#333">=</div>
<div class="lbl" style="left:1280px;top:644px">Remaining Quantity</div>
<div class="val vr" style="left:1280px;top:665px">125</div>
<div class="a" style="left:761px;top:684px;width:1148px;height:36px;background:linear-gradient(#f4f4f4,#ececec)"></div>
<div class="a" style="left:764px;top:688px;width:1108px;height:26px;background:#fff;border:1px solid #c9c9c9;border-radius:3px"></div>
<div class="t" style="left:770px;top:695px;font-size:13px;color:#8a8a8a">Enter your search criteria here</div>
<svg class="a" style="left:1853px;top:696px" width="13" height="12" viewBox="0 0 13 12"><path d="M1.5,3.3 L6.5,8.8 L11.5,3.3" fill="none" stroke="#e8561a" stroke-width="2.3"/></svg>
<svg class="a" style="left:1883px;top:694px" width="15" height="15" viewBox="1883 694 15 15"><path d="M1889.48,697.80 L1889.43,696.59 L1891.37,696.59 L1891.32,697.80 L1892.72,698.38 L1893.54,697.49 L1894.91,698.86 L1894.02,699.68 L1894.60,701.08 L1895.81,701.03 L1895.81,702.97 L1894.60,702.92 L1894.02,704.32 L1894.91,705.14 L1893.54,706.51 L1892.72,705.62 L1891.32,706.20 L1891.37,707.41 L1889.43,707.41 L1889.48,706.20 L1888.08,705.62 L1887.26,706.51 L1885.89,705.14 L1886.78,704.32 L1886.20,702.92 L1884.99,702.97 L1884.99,701.03 L1886.20,701.08 L1886.78,699.68 L1885.89,698.86 L1887.26,697.49 L1888.08,698.38 Z" fill="#e8561a"/><circle cx="1890.4" cy="702" r="2.2" fill="#f0f0f0"/></svg>
<div class="a" style="left:761px;top:720px;width:1148px;height:27px;background:linear-gradient(#f7f7f7,#e7e7e7);border-top:1px solid #dedede;border-bottom:1px solid #dedede"></div>
<div class="vl" style="left:796px;top:720px;height:71px"></div>
<div class="vl" style="left:1334px;top:720px;height:71px"></div>
<div class="vl" style="left:1414px;top:720px;height:71px"></div>
<div class="vl" style="left:1509px;top:720px;height:71px"></div>
<div class="vl" style="left:1604px;top:720px;height:71px"></div>
<div class="vl" style="left:1729px;top:720px;height:71px"></div>
<div class="vl" style="left:1839px;top:720px;height:71px"></div>
<div class="gh2" style="left:766px">St</div>
<div class="gh2" style="left:801px">Stock Location</div>
<div class="gh2" style="left:1335px;width:73px;text-align:right">Stock Qty</div>
<div class="gh2" style="left:1419px">Picking blocked</div>
<div class="gh2" style="left:1514px">Linking blocked</div>
<div class="gh2" style="left:1609px">Spare parts for repair</div>
<div class="gh2" style="left:1734px">Second hand parts</div>
<div class="gh2" style="left:1855px">History</div>
<div class="badge" style="left:766px;top:759px;background:#5b9598;border-color:#4d8588;font-size:11px">4</div>
<div class="t" style="left:802px;top:763px;font-size:13px;color:#222">Unassigned</div><svg class="a" style="left:873px;top:762px" width="14" height="14" viewBox="0 0 11 11"><rect width="11" height="11" rx="2" fill="#222"/><path d="M2.8,8.2 L6.8,4.2" stroke="#fff" stroke-width="1.4"/><path d="M4.6,2.4 H8.6 V6.4 Z" fill="#fff"/></svg>
<div class="t" style="left:1335px;top:763px;width:74px;text-align:right;font-size:13px;color:#333">125</div>
<div class="cb" style="left:1455px;top:763px"></div>
<div class="cb" style="left:1550px;top:763px"></div>
<div class="cb" style="left:1660px;top:763px;border-color:#ddd;background:#f6f6f6"></div>
<div class="cb" style="left:1778px;top:763px"></div>
<svg class="a" style="left:1867px;top:762px" width="14" height="14" viewBox="0 0 11 11"><rect width="11" height="11" rx="2" fill="#222"/><path d="M2.8,8.2 L6.8,4.2" stroke="#fff" stroke-width="1.4"/><path d="M4.6,2.4 H8.6 V6.4 Z" fill="#fff"/></svg>
<!-- footer -->
<div class="a" style="left:761px;top:889px;width:1148px;height:33px;background:linear-gradient(#f0efef,#e9e9e9)"></div>
<div class="t" style="left:1734px;top:899px;font-size:12px;color:#333">Page 1 / 1</div>
<div class="pg" style="left:1797px;top:894px"><svg width="22" height="22" viewBox="0 0 22 22"><path d="M7.5,7 V15" stroke="#ccc" stroke-width="1.6"/><path d="M15,7 L8.5,11 L15,15 Z" fill="#ccc"/></svg></div>
<div class="pg" style="left:1825px;top:894px"><svg width="22" height="22" viewBox="0 0 22 22"><path d="M14,7 L7.5,11 L14,15 Z" fill="#ccc"/></svg></div>
<div class="pg" style="left:1853px;top:894px"><svg width="22" height="22" viewBox="0 0 22 22"><path d="M8.5,7 L15,11 L8.5,15 Z" fill="#ccc"/></svg></div>
<div class="pg" style="left:1881px;top:894px"><svg width="22" height="22" viewBox="0 0 22 22"><path d="M14.5,7 V15" stroke="#ccc" stroke-width="1.6"/><path d="M7,7 L13.5,11 L7,15 Z" fill="#ccc"/></svg></div>
</body></html>
